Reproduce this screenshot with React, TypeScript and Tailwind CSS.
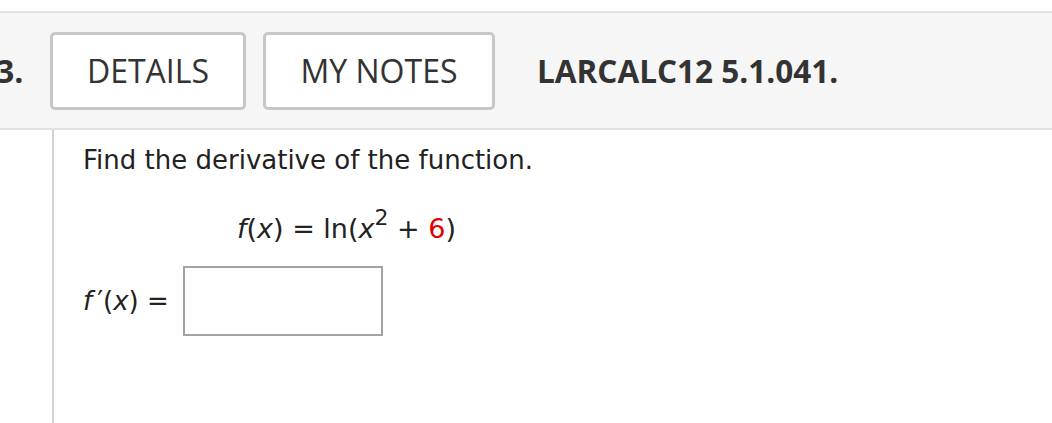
import React from "react";

// WebAssign-style question block: header with buttons, then the prompt.

const headerFont = { fontFamily: '"Open Sans", "Liberation Sans", sans-serif' };
const bodyFont = { fontFamily: '"DejaVu Sans", Verdana, sans-serif' };

const App: React.FC = () => {
  return (
    <div className="w-[1052px] h-[423px] overflow-hidden bg-white text-[#333]">
      <div className="h-[11px]" />

      {/* header strip */}
      <div
        className="flex h-[119px] items-center border-y-2 border-[#e2e2e2] bg-[#f6f6f6]"
        style={headerFont}
      >
        <span className="ml-[-4px] w-[54px] text-[32px] font-bold leading-none">3.</span>
        <button className="flex h-[78px] w-[196px] items-center justify-center rounded-[5px] border-[3px] border-[#c7c7c7] bg-white text-[32px] text-[#333]">
          DETAILS
        </button>
        <button className="ml-[17px] flex h-[78px] w-[232px] items-center justify-center rounded-[5px] border-[3px] border-[#c7c7c7] bg-white text-[32px] text-[#333]">
          MY NOTES
        </button>
        <span className="ml-[42px] text-[31.5px] font-bold leading-none">LARCALC12 5.1.041.</span>
      </div>

      {/* body */}
      <div className="flex" style={bodyFont}>
        <div className="h-[300px] w-[54px] border-r-2 border-[#d4d4d4]" />
        <div className="pl-[29px] pt-[14px] text-[26px] leading-[32px] text-[#222]">
          <p>Find the derivative of the function.</p>

          <p className="mt-[37px] pl-[154px] text-[27px] whitespace-pre">
            <i>f</i>(<i>x</i>) = ln(<i>x</i>
            <sup className="top-[-13px] text-[22px]">2</sup> + <span className="text-[#e00000]">6</span>)
          </p>

          <div className="mt-[21px] flex items-center">
            <span>
              <i>f</i>
              <span className="ml-[5px]">′</span>(<i>x</i>) =
            </span>
            <div className="ml-[14px] h-[70px] w-[200px] border-2 border-[#a3a3a3] bg-white" />
          </div>
        </div>
      </div>
    </div>
  );
};

export default App;
